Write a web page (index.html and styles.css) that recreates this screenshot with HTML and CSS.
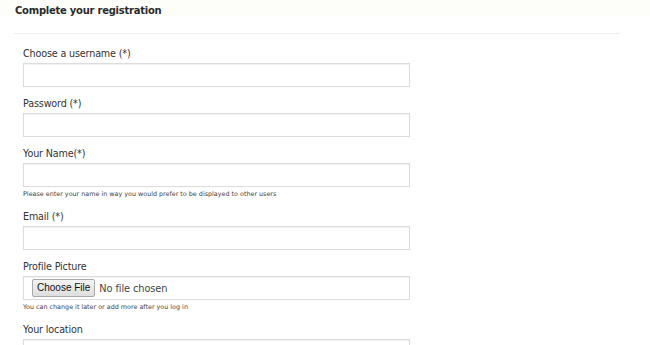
FILE: index.html
```html
<!DOCTYPE html>
<html>
<head>
<meta charset="utf-8">
<link rel="stylesheet" href="styles.css">
</head>
<body>
<div class="page">
  <div class="top">
    <h1 class="title">Complete your registration</h1>
  </div>
  <div class="sep"></div>
  <form class="form">
    <div class="group">
      <label class="label">Choose a username (*)</label>
      <div class="control"></div>
    </div>
    <div class="group">
      <label class="label">Password (*)</label>
      <div class="control"></div>
    </div>
    <div class="group">
      <label class="label">Your Name(*)</label>
      <div class="control"></div>
      <p class="help">Please enter your name in way you would prefer to be displayed to other users</p>
    </div>
    <div class="group">
      <label class="label">Email (*)</label>
      <div class="control"></div>
    </div>
    <div class="group">
      <label class="label">Profile Picture</label>
      <div class="control file">
        <span class="file-btn">Choose File</span>
        <span class="file-name">No file chosen</span>
      </div>
      <p class="help">You can change it later or add more after you log in</p>
    </div>
    <div class="group">
      <label class="label">Your location</label>
      <div class="control"></div>
    </div>
  </form>
</div>
</body>
</html>
```
FILE: styles.css
```css
html, body {
  margin: 0;
  padding: 0;
  background: #ffffff;
}
body {
  font-family: "DejaVu Sans", "Open Sans", sans-serif;
  color: #333333;
  overflow: hidden;
  height: 345px;
}
.page {
  padding: 0 30px 0 14px;
}
.top {
  background: #fdfdfa;
  height: 16px;
  margin: 0 -30px 0 -14px;
  padding: 0 30px 0 15px;
}
.title {
  margin: 0;
  padding-top: 5px;
  font-size: 10px;
  line-height: 12px;
  letter-spacing: -0.25px;
  font-weight: bold;
  color: #2b2b2b;
}
.sep {
  margin-top: 17px;
  height: 1px;
  background: #eeeeee;
}
.form {
  padding: 13px 0 0 9px;
}
.group {
  padding-bottom: 10px;
}
.label {
  display: block;
  font-size: 9.6px;
  letter-spacing: -0.15px;
  line-height: 14px;
  margin-bottom: 2px;
  color: #333333;
}
.control {
  box-sizing: border-box;
  width: 387px;
  height: 24px;
  border: 1px solid #dddddd;
  box-shadow: inset 0 1px 1px rgba(0,0,0,0.06), 0 0 1px rgba(0,0,0,0.08);
  background: #ffffff;
}
.file {
  display: flex;
  align-items: center;
  padding-left: 8px;
  gap: 4px;
}
.file-btn {
  font-family: "Liberation Sans", Arial, sans-serif;
  font-size: 10px;
  color: #111111;
  background: linear-gradient(#f4f4f4, #dedede);
  border: 1px solid #a9a9a9;
  border-radius: 2px;
  padding: 2px 4px;
  line-height: 12px;
}
.file-name {
  font-size: 9.8px;
  letter-spacing: -0.1px;
  color: #444444;
}
.help {
  margin: 3px 0 0;
  padding-bottom: 2px;
  font-size: 6.4px;
  line-height: 8px;
  color: #444444;
}
```
